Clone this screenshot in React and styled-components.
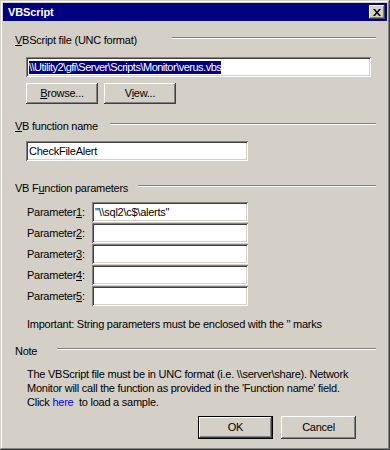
import { Fragment } from 'react'
import styled, { createGlobalStyle } from 'styled-components'

const GlobalStyle = createGlobalStyle`
  html, body {
    margin: 0;
    padding: 0;
    background: #d4d0c8;
  }
  body {
    font-family: "Liberation Sans", Arial, sans-serif;
    font-size: 11px;
    color: #000000;
  }
`

const Window = styled.div`
  width: 390px;
  height: 450px;
  box-sizing: border-box;
  padding: 3px;
  background: #d4d0c8;
  box-shadow: inset -1px -1px #404040, inset 1px 1px #d4d0c8,
    inset -2px -2px #808080, inset 2px 2px #ffffff;
  display: flex;
  flex-direction: column;
`

const TitleBar = styled.div`
  height: 18px;
  flex: none;
  background: #000080;
  display: flex;
  align-items: center;
  justify-content: space-between;
  padding: 0 2px 0 5px;
`

const Title = styled.span`
  color: #ffffff;
  font-weight: bold;
  font-size: 11px;
  letter-spacing: -0.1px;
`

const CloseButton = styled.div`
  width: 16px;
  height: 14px;
  background: #d4d0c8;
  box-shadow: inset -1px -1px #404040, inset 1px 1px #ffffff,
    inset -2px -2px #808080, inset 2px 2px #d4d0c8;
  display: flex;
  align-items: center;
  justify-content: center;
`

const Body = styled.div`
  display: flex;
  flex-direction: column;
  padding: 0 11px 0 12px;
  line-height: 13px;
  letter-spacing: -0.25px;
`

const Header = styled.div`
  display: flex;
  align-items: center;
  height: 13px;
  margin-top: ${(p) => p.$mt}px;
`

const HeaderLabel = styled.span`
  flex: none;
  width: ${(p) => p.$w}px;
  white-space: nowrap;
`

const Groove = styled.div`
  flex: 1;
  height: 0;
  border-top: 1px solid #808080;
  border-bottom: 1px solid #ffffff;
  margin-bottom: 5px;
`

const Indent = styled.div`
  margin-left: 11px;
  margin-top: ${(p) => p.$mt || 0}px;
`

const TextBox = styled.div`
  width: ${(p) => p.$w}px;
  height: 20px;
  box-sizing: border-box;
  background: #ffffff;
  box-shadow: inset 1px 1px #808080, inset -1px -1px #ffffff,
    inset 2px 2px #404040, inset -2px -2px #d4d0c8;
  padding: 0 3px;
  display: flex;
  align-items: center;
  white-space: nowrap;
  overflow: hidden;
`

const Selected = styled.span`
  background: #000080;
  color: #ffffff;
  line-height: 13px;
  letter-spacing: -0.5px;
`

const ButtonRow = styled.div`
  display: flex;
  gap: ${(p) => p.$gap}px;
  justify-content: ${(p) => (p.$end ? 'flex-end' : 'flex-start')};
  padding-right: ${(p) => p.$pr || 0}px;
  margin-top: ${(p) => p.$mt}px;
`

const Button = styled.div`
  width: ${(p) => p.$w}px;
  height: ${(p) => p.$h}px;
  box-sizing: border-box;
  display: flex;
  align-items: center;
  justify-content: center;
  background: #d4d0c8;
  box-shadow: ${(p) =>
    p.$default
      ? 'inset 0 0 0 1px #000000, inset -2px -2px #404040, inset 2px 2px #ffffff, inset -3px -3px #808080'
      : 'inset -1px -1px #404040, inset 1px 1px #ffffff, inset -2px -2px #808080, inset 2px 2px #d4d0c8'};
`

const ParamGrid = styled.div`
  display: grid;
  grid-template-columns: 65px 156px;
  grid-auto-rows: 20px;
  row-gap: 1px;
  margin-left: 12px;
  margin-top: 7px;
`

const ParamLabel = styled.span`
  display: flex;
  align-items: center;
`

const Paragraph = styled.p`
  margin: ${(p) => p.$mt}px 0 0 12px;
  line-height: ${(p) => p.$lh || 13}px;
  white-space: nowrap;
`

const Link = styled.span`
  color: #0000ff;
`

function CloseIcon() {
  return (
    <svg width="8" height="7" viewBox="0 0 8 7">
      <path d="M0 0h2l2 2.5L6 0h2L5 3.5 8 7H6L4 4.5 2 7H0l3-3.5z" fill="#000000" />
    </svg>
  )
}

const params = ['"\\\\sql2\\c$\\alerts"', '', '', '', '']

function App() {
  return (
    <>
      <GlobalStyle />
      <Window>
        <TitleBar>
          <Title>VBScript</Title>
          <CloseButton>
            <CloseIcon />
          </CloseButton>
        </TitleBar>
        <Body>
          <Header $mt={13}>
            <HeaderLabel $w={157}>
              <u>V</u>BScript file (UNC format)
            </HeaderLabel>
            <Groove />
          </Header>
          <Indent $mt={10}>
            <TextBox $w={345}>
              <Selected>\\Utility2\gfi\Server\Scripts\Monitor\verus.vbs</Selected>
            </TextBox>
          </Indent>
          <Indent>
            <ButtonRow $gap={6} $mt={6}>
              <Button $w={72} $h={21}>
                <span>
                  <u>B</u>rowse...
                </span>
              </Button>
              <Button $w={72} $h={21}>
                <span>
                  V<u>i</u>ew...
                </span>
              </Button>
            </ButtonRow>
          </Indent>

          <Header $mt={16}>
            <HeaderLabel $w={95}>
              <u>V</u>B function name
            </HeaderLabel>
            <Groove />
          </Header>
          <Indent $mt={8}>
            <TextBox $w={222}>CheckFileAlert</TextBox>
          </Indent>

          <Header $mt={21}>
            <HeaderLabel $w={123}>
              VB F<u>u</u>nction parameters
            </HeaderLabel>
            <Groove />
          </Header>
          <ParamGrid>
            {params.map((value, i) => (
              <Fragment key={i}>
                <ParamLabel>
                  Parameter<u>{i + 1}</u>:
                </ParamLabel>
                <TextBox $w={156}>{value}</TextBox>
              </Fragment>
            ))}
          </ParamGrid>
          <Paragraph $mt={12}>
            Important: String parameters must be enclosed with the '' marks
          </Paragraph>

          <Header $mt={14}>
            <HeaderLabel $w={42}>Note</HeaderLabel>
            <Groove />
          </Header>
          <Paragraph $mt={9} $lh={14}>
            The VBScript file must be in UNC format (i.e. \\server\share). Network
            <br />
            Monitor will call the function as provided in the 'Function name' field.
            <br />
            Click <Link>here</Link>&nbsp; to load a sample.
          </Paragraph>
          <ButtonRow $gap={8} $mt={7} $end $pr={20}>
            <Button $w={75} $h={23} $default>
              OK
            </Button>
            <Button $w={75} $h={23}>
              Cancel
            </Button>
          </ButtonRow>
        </Body>
      </Window>
    </>
  )
}

export default App
